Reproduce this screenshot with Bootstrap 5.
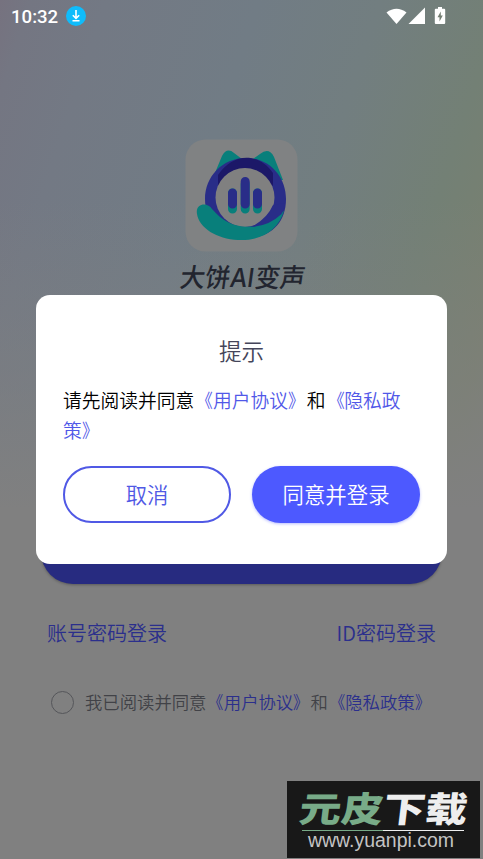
<!DOCTYPE html>
<html lang="zh-CN">
<head>
<meta charset="utf-8">
<meta name="viewport" content="width=device-width, initial-scale=1">
<title>大饼AI变声</title>
<link href="https://cdn.jsdelivr.net/npm/bootstrap@5.3.0/dist/css/bootstrap.min.css" rel="stylesheet">
<style>
body{font-family:Roboto,"Noto Sans CJK SC",sans-serif;height:859px;overflow:hidden;background:#808080;color:#414247}
.screen{height:859px;background:
 linear-gradient(180deg,rgba(128,128,128,0) 0,rgba(128,128,128,0) 200px,rgba(128,128,128,.5) 380px,#808080 510px),
 linear-gradient(108deg,#76727f 0,#747682 4%,#737984 14%,#717c85 34%,#727e80 50%,#738075 66%,#79806f 78%,#808080 95%)}
.status{height:32px;padding:1px 36px 0 11px;color:#fff;font-size:18.6px;font-weight:500}
.status span{padding-top:2px}
.status svg{display:block}
.cjk{font-family:"Noto Sans CJK SC",sans-serif;font-weight:350}
.app-icon{margin-top:107px;width:113px;height:113px}
.app-name{margin-top:4px;width:150px;height:44px;overflow:visible}
.login{margin:220px 41px 0;height:64px;background:#272b80;border:0;box-shadow:0 1px 3px rgba(0,0,0,.3)}
.login:hover{background:#272b80}
.alt-row{margin:34px 47px 0;font-size:20px;line-height:30px}
.ink-link{color:#2b2f8c;text-decoration:none}
.agree{margin:39px 0 0 51px;font-size:17.35px;line-height:30px;gap:11px;white-space:nowrap}
.ring{width:23px;height:23px;border:1.5px solid #55565a}
.dialog{width:411px;height:269px;border-radius:14px;padding:38px 27px 0}
.dialog h1{font-size:22.6px;line-height:36px;font-weight:350;color:#44455a;margin:0}
.dialog p{font-size:18.75px;line-height:29.5px;color:#000;margin:16px -6px 0 0;white-space:nowrap}
.dialog p a{color:#5158e8;text-decoration:none}
.bk-l,.bk-r{display:inline-block;transform:scaleX(.88);transform-origin:100% 50%}
.bk-r{transform-origin:0 50%}
.choices{gap:21px;margin-top:22px}
.choices .btn{height:57px;font-size:21.4px;line-height:1;padding:0 0 2px;font-weight:350}
.btn-no{border:2px solid #5059e5;color:#5059e5}
.btn-yes{background:#4d59ff;color:#fff;border:0;box-shadow:0 1px 3px rgba(77,89,255,.4)}
.stamp{position:absolute;left:287px;top:781px;width:193px;height:77px;background:#181818}
</style>
</head>
<body>
<main class="screen d-flex flex-column">
 <header class="status d-flex align-items-center justify-content-between">
  <div class="d-flex align-items-center gap-2"><span>10:32</span>
   <svg width="20" height="20" viewBox="0 0 20 20"><circle cx="10" cy="10" r="10" fill="#0fbcfb"/><path d="M10 4v8M6.8 9.2l3.2 3.2 3.2-3.2M6.5 14.8h7" fill="none" stroke="#fff" stroke-width="1.6"/></svg>
  </div>
  <svg width="61" height="20" viewBox="0 0 61 20"><g fill="#fff"><path d="M.5 5.500Q10.500-2 20.500 5.500L10.500 17z"/><path d="M22.500 17L39 .500V17z"/><path d="M52 0h4v1.700h2.200q1 0 1 1V16q0 1-1 1h-8.400q-1 0-1-1V2.700q0-1 1-1H52z"/></g><path d="M54.800 4.500l-3.300 5.800h2v4.300l3.300-6h-2z" fill="#747f73"/></svg>
 </header>
 <svg class="app-icon align-self-center" viewBox="0 0 113 113">
  <rect x=".5" y=".5" width="112" height="112" rx="20" fill="#808283"/>
  <path d="M27 41L37 17Q42 8 49 14L57 20H68L75 15Q84 8 89 18L98 41Z" fill="#087f7b"/>
  <path d="M61 19C85 19 101 38 101 60C101 86 83 100 59 99C35 99 20 82 20 60C20 38 37 19 61 19Z" fill="#292d88"/>
  <path d="M33 47V36C48 14 73 13 88 34V47Q61 18 33 47Z" fill="#1c1868"/>
  <circle cx="60" cy="58.500" r="29.500" fill="#808080"/>
  <path d="M12 75C10 64 23 63 27 70C39 84 53 90 71 87C84 83 91 76 99 72C93 91 77 102 53 101C32 100 14 89 12 75Z" fill="#087f7b"/>
  <path d="M66 88Q82 80 88 66L100 64Q99 71 96.500 75Q84 87 66 88Z" fill="#292d88"/>
  <g stroke-width="9" stroke-linecap="round"><path d="M47.500 54V70M60.200 45V70M72.500 54V70" stroke="#087f7b"/><path d="M47.500 54V65M60.200 42.500V65M72.500 54V65" stroke="#292d88"/></g>
 </svg>
 <svg class="app-name align-self-center" viewBox="0 0 150 44"><g class="cjk" transform="translate(12 31) skewX(-8)" font-size="26" style="font-weight:500" fill="#22252f"><text textLength="50" lengthAdjust="spacingAndGlyphs">大饼</text><text x="50" textLength="24" lengthAdjust="spacingAndGlyphs" font-family="Inter">AI</text><text x="75" textLength="50" lengthAdjust="spacingAndGlyphs">变声</text></g></svg>
 <button class="login btn rounded-pill" aria-label="登录"></button>
 <div class="alt-row d-flex justify-content-between cjk"><a class="ink-link" href="#">账号密码登录</a><a class="ink-link" href="#">ID密码登录</a></div>
 <div class="agree d-flex align-items-center cjk"><span class="ring rounded-circle"></span><span>我已阅读并同意<a class="ink-link" href="#"><span class="bk-l">《</span>用户协议<span class="bk-r">》</span></a>和<a class="ink-link" href="#"><span class="bk-l">《</span>隐私政策<span class="bk-r">》</span></a></span></div>
</main>
<div class="position-absolute top-0 start-0 w-100 h-100 d-flex align-items-center justify-content-center">
 <section class="dialog bg-white cjk" role="dialog">
  <h1 class="text-center">提示</h1>
  <p>请先阅读并同意<a href="#"><span class="bk-l">《</span>用户协议<span class="bk-r">》</span></a>和<a href="#"><span class="bk-l">《</span>隐私政<br>策<span class="bk-r">》</span></a></p>
  <div class="choices d-flex"><button class="btn btn-no rounded-pill flex-fill w-50">取消</button><button class="btn btn-yes rounded-pill flex-fill w-50">同意并登录</button></div>
 </section>
</div>
<svg class="stamp" viewBox="0 0 193 77">
 <g font-family="Noto Sans CJK SC" font-size="35" font-weight="900" transform="translate(11 41) skewX(-7)"><text fill="#78ab88" textLength="84" lengthAdjust="spacingAndGlyphs">元皮</text><text x="84" fill="#eee" textLength="84" lengthAdjust="spacingAndGlyphs">下载</text></g>
 <path d="M15 49.500H96" stroke="#78ab88"/><path d="M96 49.500H177" stroke="#eee"/>
 <text x="21" y="66" font-family="Liberation Sans" font-size="20" fill="#c4c4c4" textLength="146" lengthAdjust="spacingAndGlyphs">www.yuanpi.com</text>
</svg>
<script src="https://cdn.jsdelivr.net/npm/bootstrap@5.3.0/dist/js/bootstrap.bundle.min.js"></script>
</body>
</html>
